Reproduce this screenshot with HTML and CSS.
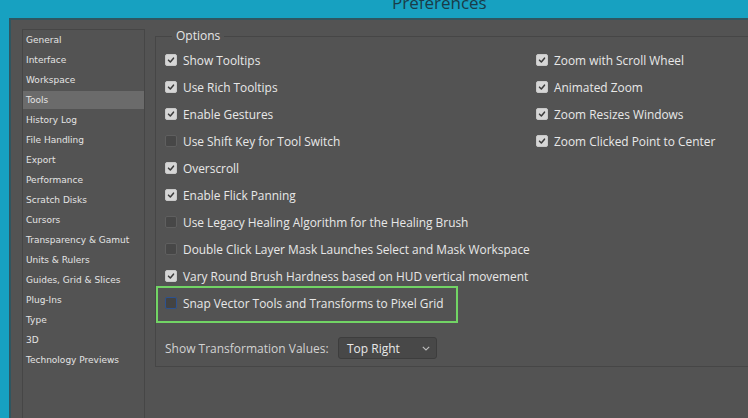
FILE: index.html
```html
<!DOCTYPE html>
<html lang="en">
<head>
<meta charset="utf-8">
<title>Preferences</title>
<link rel="stylesheet" href="styles.css">
</head>
<body>
<div class="titlebar"><span class="title">Preferences</span></div>
<div class="window">
  <ul class="sidebar">
    <li>General</li>
    <li>Interface</li>
    <li>Workspace</li>
    <li class="active">Tools</li>
    <li>History Log</li>
    <li>File Handling</li>
    <li>Export</li>
    <li>Performance</li>
    <li>Scratch Disks</li>
    <li>Cursors</li>
    <li>Transparency &amp; Gamut</li>
    <li>Units &amp; Rulers</li>
    <li>Guides, Grid &amp; Slices</li>
    <li>Plug-Ins</li>
    <li>Type</li>
    <li>3D</li>
    <li>Technology Previews</li>
  </ul>
  <div class="main">
    <fieldset class="options">
      <legend>Options</legend>
      <div class="cols">
        <div class="col">
          <div class="row"><span class="cb on"><svg viewBox="0 0 12 12"><polyline points="3,6.2 5.2,8.4 9,3.8"/></svg></span>Show Tooltips</div>
          <div class="row"><span class="cb on"><svg viewBox="0 0 12 12"><polyline points="3,6.2 5.2,8.4 9,3.8"/></svg></span>Use Rich Tooltips</div>
          <div class="row"><span class="cb on"><svg viewBox="0 0 12 12"><polyline points="3,6.2 5.2,8.4 9,3.8"/></svg></span>Enable Gestures</div>
          <div class="row"><span class="cb"></span>Use Shift Key for Tool Switch</div>
          <div class="row"><span class="cb on"><svg viewBox="0 0 12 12"><polyline points="3,6.2 5.2,8.4 9,3.8"/></svg></span>Overscroll</div>
          <div class="row"><span class="cb on"><svg viewBox="0 0 12 12"><polyline points="3,6.2 5.2,8.4 9,3.8"/></svg></span>Enable Flick Panning</div>
          <div class="row"><span class="cb"></span>Use Legacy Healing Algorithm for the Healing Brush</div>
          <div class="row"><span class="cb"></span>Double Click Layer Mask Launches Select and Mask Workspace</div>
          <div class="row"><span class="cb on"><svg viewBox="0 0 12 12"><polyline points="3,6.2 5.2,8.4 9,3.8"/></svg></span>Vary Round Brush Hardness based on HUD vertical movement</div>
          <div class="row highlight"><span class="cb focus"></span>Snap Vector Tools and Transforms to Pixel Grid</div>
        </div>
        <div class="col">
          <div class="row"><span class="cb on"><svg viewBox="0 0 12 12"><polyline points="3,6.2 5.2,8.4 9,3.8"/></svg></span>Zoom with Scroll Wheel</div>
          <div class="row"><span class="cb on"><svg viewBox="0 0 12 12"><polyline points="3,6.2 5.2,8.4 9,3.8"/></svg></span>Animated Zoom</div>
          <div class="row"><span class="cb on"><svg viewBox="0 0 12 12"><polyline points="3,6.2 5.2,8.4 9,3.8"/></svg></span>Zoom Resizes Windows</div>
          <div class="row"><span class="cb on"><svg viewBox="0 0 12 12"><polyline points="3,6.2 5.2,8.4 9,3.8"/></svg></span>Zoom Clicked Point to Center</div>
        </div>
      </div>
      <div class="transform">
        <span class="label">Show Transformation Values:</span>
        <div class="select"><span>Top Right</span><svg viewBox="0 0 8 5"><polyline points="0.8,0.8 4,4 7.2,0.8"/></svg></div>
      </div>
    </fieldset>
  </div>
</div>
</body>
</html>
```

FILE: styles.css
```css
html, body {
  margin: 0;
  padding: 0;
  width: 748px;
  height: 418px;
  overflow: hidden;
  background: #17a1c1;
  font-family: "Open Sans", "Noto Sans", sans-serif;
}

.titlebar {
  height: 18px;
  overflow: hidden;
  padding-left: 392px;
}

.title {
  display: block;
  margin-top: -6px;
  font-size: 17px;
  line-height: 17px;
  color: #1a3c48;
}

.window {
  margin-left: 9px;
  height: 400px;
  border-left: 2px solid #2f5660;
  border-top: 2px solid #2f5660;
  background: #535353;
  display: flex;
  padding: 9px 0 0 11px;
  box-sizing: border-box;
}

.sidebar {
  list-style: none;
  margin: 0;
  padding: 1px 0 0;
  width: 123px;
  box-sizing: border-box;
  border: 1px solid #464646;
  border-bottom: none;
  font-family: "DejaVu Sans", sans-serif;
  font-size: 9px;
  color: #e4e4e4;
  flex-shrink: 0;
}

.sidebar li {
  height: 18px;
  line-height: 18px;
  margin-bottom: 2px;
  padding-left: 3px;
}

.sidebar li.active {
  background: #6b6b6b;
}

.main {
  margin-left: 10px;
  flex-shrink: 0;
}

.options {
  margin: 0;
  width: 640px;
  height: 338px;
  box-sizing: border-box;
  border: 1px solid #464646;
  padding: 3px 0 0 8px;
}

.options legend {
  margin-left: 8px;
  padding: 0 4px;
  font-size: 12px;
  line-height: 14px;
  color: #e6e6e6;
}

.cols {
  display: grid;
  grid-template-columns: 371px auto;
}

.row {
  height: 27px;
  display: flex;
  align-items: center;
  gap: 6px;
  font-size: 11.9px;
  color: #e8e8e8;
  white-space: nowrap;
}

.cb {
  width: 12px;
  height: 12px;
  box-sizing: border-box;
  border-radius: 2px;
  border: 1px solid #5f5f5f;
  background: #474747;
  flex-shrink: 0;
  display: flex;
  margin-left: 1px;
}

.cb.on {
  background: #d6d6d6;
  border-color: #c8c8c8;
}

.cb svg {
  width: 10px;
  height: 10px;
}

.cb polyline {
  fill: none;
  stroke: #3b3b3b;
  stroke-width: 1.8;
  stroke-linecap: round;
  stroke-linejoin: round;
}

.cb.focus {
  border: 1px solid #2d5290;
  background: #434343;
}

.highlight {
  position: relative;
}

.highlight::after {
  content: "";
  position: absolute;
  left: -8px;
  top: -3px;
  width: 302px;
  height: 37px;
  box-sizing: border-box;
  border: 2px solid #72d465;
}

.transform {
  display: flex;
  align-items: center;
  height: 22px;
  margin-top: 21px;
  padding-left: 1px;
}

.label {
  font-size: 12px;
  color: #d2d2d2;
  width: 173px;
}

.select {
  width: 99px;
  height: 22px;
  box-sizing: border-box;
  border: 1px solid #3d3d3d;
  border-radius: 3px;
  background: #484848;
  display: flex;
  align-items: center;
  justify-content: space-between;
  padding: 0 6px 0 8px;
  font-size: 12px;
  color: #e8e8e8;
}

.select svg {
  width: 8px;
  height: 5px;
}

.select polyline {
  fill: none;
  stroke: #bdbdbd;
  stroke-width: 1.1;
}
```
